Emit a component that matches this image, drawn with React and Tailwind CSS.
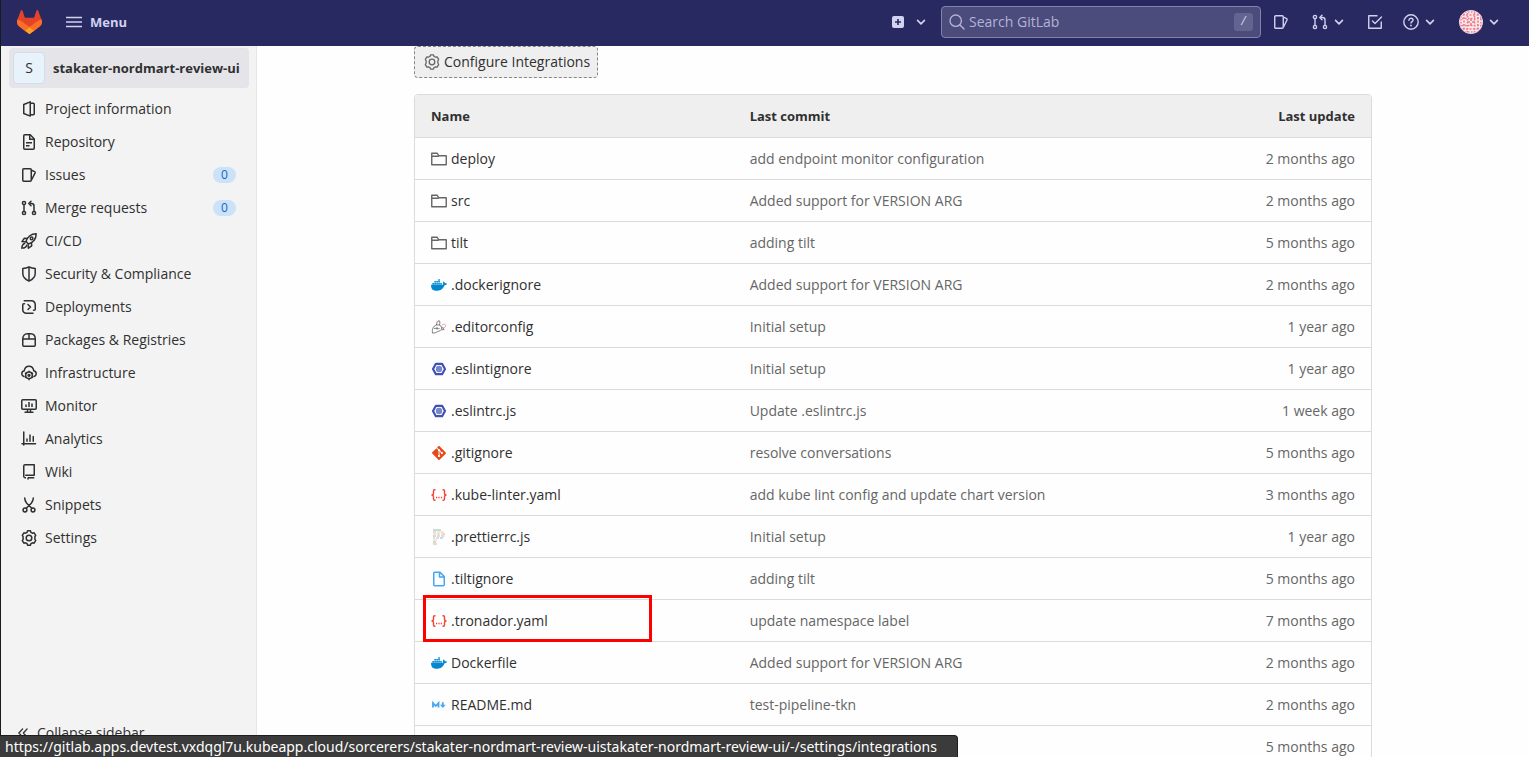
import { SiDocker, SiGit } from "react-icons/si";

function Icon({ children, className = "", size = 16, stroke = 1.5 }) {
  return (
    <svg
      aria-hidden="true"
      width={size}
      height={size}
      viewBox="0 0 16 16"
      fill="none"
      stroke="currentColor"
      strokeWidth={stroke}
      className={`shrink-0 ${className}`}
    >
      {children}
    </svg>
  );
}

const Chevron = () => (
  <Icon size={10}>
    <path strokeWidth="2.6" strokeLinecap="round" strokeLinejoin="round" d="m2.500 5.500 5.500 5.500 5.500-5.500" />
  </Icon>
);

const IssuesGlyph = () => (
  <>
    <rect x="1.750" y="1.750" width="8.500" height="12.500" rx="1" />
    <path strokeLinejoin="round" d="M10.500 3.200 13.600 4.600c.5.200.7.700.5 1.200L10.500 13" />
  </>
);

const MergeGlyph = () => (
  <>
    <circle cx="3" cy="3" r="1.600" />
    <circle cx="3" cy="13" r="1.600" />
    <circle cx="13" cy="13" r="1.600" />
    <path d="M3 4.600v6.800M13 11.400V6c0-1.500-1-2.500-2.500-2.500H8.500" />
    <path strokeLinecap="round" strokeLinejoin="round" d="M10 1.200 7.800 3.500 10 5.700" />
  </>
);

const GearGlyph = () => (
  <>
    <circle cx="8" cy="8" r="2.800" />
    <path
      strokeLinejoin="round"
      d="M6.600.8h2.800l.5 1.500 1.500.9 1.700-.4 1.600 2.500-.8 1.400v2.600l.8 1.400-1.600 2.500-1.700-.4-1.500.9-.5 1.500H6.600l-.5-1.500-1.500-.9-1.700.4-1.600-2.500.8-1.400V6.700l-.8-1.400 1.600-2.500 1.700.4 1.500-.9z"
    />
  </>
);

const NAV = [
  {
    label: "Project information",
    glyph: (
      <path strokeLinejoin="round" d="M2.750 3.500 9.250.9v14.200l-6.500-2.600zM9.250 2.250h3c.6 0 1 .4 1 1v9.500c0 .6-.4 1-1 1h-3" />
    ),
  },
  {
    label: "Repository",
    glyph: (
      <>
        <path strokeLinejoin="round" d="M2.750 1.750v12.500c0 .6.400 1 1 1h8.500c.6 0 1-.4 1-1V5l-4-4.250h-5.500c-.6 0-1 .4-1 1z" />
        <path d="M8.750.75V5.250h4.500M5 8.750h6M5 11.750h3.500" />
      </>
    ),
  },
  { label: "Issues", count: 0, glyph: <IssuesGlyph /> },
  { label: "Merge requests", count: 0, glyph: <MergeGlyph /> },
  {
    label: "CI/CD",
    glyph: (
      <>
        <path strokeLinejoin="round" d="M5 8.500C6.500 4 10 .9 15.200.8 15.100 6 12 9.500 7.500 11z" />
        <path strokeLinejoin="round" d="M6.200 5.500 3.200 5.300 1 8.600l4 .3M10.500 9.800l.2 3-3.300 2.400-.4-4" />
        <path strokeLinecap="round" d="M3.700 10.400c-2 .4-2.700 1.800-2.800 4.700 2.900-.1 4.300-.8 4.700-2.800" />
        <circle cx="10.600" cy="5.400" r="1.300" />
      </>
    ),
  },
  {
    label: "Security & Compliance",
    glyph: (
      <path strokeLinejoin="round" d="M8 .9c2 1 4 1.500 6.200 1.700v4.800c0 3.700-2.700 6-6.200 7.700-3.500-1.700-6.200-4-6.200-7.700V2.600C4 2.400 6 1.900 8 .9zV15" />
    ),
  },
  {
    label: "Deployments",
    glyph: (
      <>
        <path strokeLinecap="round" d="M3.250 1.750h7.250a3.750 3.750 0 0 1 3.750 3.750v4.750c0 .6-.4 1-1 1h-.75" />
        <path strokeLinecap="round" d="M3.500 4.750h-.75c-.6 0-1 .4-1 1v5a3.500 3.500 0 0 0 3.500 3.500H12" />
        <path strokeLinecap="round" strokeLinejoin="round" d="m7 5.500 2.500 2.500L7 10.500" />
      </>
    ),
  },
  {
    label: "Packages & Registries",
    glyph: (
      <path strokeLinejoin="round" d="M1.750 7c0-3.300 1.900-5.250 4.500-5.250h3.500c2.600 0 4.500 1.950 4.500 5.250v6.250c0 .6-.4 1-1 1H2.750c-.6 0-1-.4-1-1zM1.750 7h12.500M8 1.750V7" />
    ),
  },
  {
    label: "Infrastructure",
    glyph: (
      <>
        <path strokeLinecap="round" d="M3 11.500C1.600 11.100.8 10 .8 8.700c0-1.500 1-2.600 2.400-2.900C3.600 3.300 5.500 1.300 8 1.300s4.400 2 4.800 4.500c1.400.3 2.400 1.400 2.400 2.900 0 1.300-.8 2.400-2.200 2.800" />
        <circle cx="8" cy="10.300" r="3.300" />
        <circle cx="8" cy="10.300" r=".9" />
        <path d="M8 5.800V7M8 13.600v1.700M4 8l1.100.6M12 8l-1.100.6M4 12.600l1.100-.6M12 12.600l-1.100-.6" />
      </>
    ),
  },
  {
    label: "Monitor",
    glyph: (
      <>
        <rect x=".75" y="1.750" width="14.500" height="9.500" rx="1" />
        <path d="M5 9V6.500M8 9V4M11 9V5.500M6.500 11.250v2.500M9.500 11.250v2.500M3.500 14.250h9" />
      </>
    ),
  },
  {
    label: "Analytics",
    glyph: <path strokeLinecap="round" d="M2.750 1v13M1 12.750h13.500M6 10.200V8M9 10.200V4M12.250 10.200V5.500" />,
  },
  {
    label: "Wiki",
    glyph: (
      <path strokeLinejoin="round" d="M5 13.750H4A1.500 1.500 0 0 1 2.750 12.500V2c0-.7.500-1.250 1.250-1.250h9.250v10.500H4.200M7 15.500v-2M7 13.750h6.250" />
    ),
  },
  {
    label: "Snippets",
    glyph: (
      <>
        <circle cx="4" cy="13" r="1.900" />
        <circle cx="12" cy="13" r="1.900" />
        <path strokeLinecap="round" d="M3.700.9c0 2 .8 3.800 2 5.300l5.100 5.100M12.300.9c0 2-.8 3.800-2 5.300l-5.100 5.100" />
      </>
    ),
  },
  { label: "Settings", glyph: <GearGlyph /> },
];

const FolderIcon = () => (
  <Icon className="text-[#666666]" stroke={1.400}>
    <path strokeLinejoin="round" d="M.75 13.750V2.250h5.500l1.500 2.500h7.500v9zM.75 5.250h7" />
  </Icon>
);
const DockerIcon = () => <SiDocker size={16} className="shrink-0 text-[#0288d1]" />;
const GitIcon = () => <SiGit size={14} className="mx-px shrink-0 text-[#e64a19]" />;
const EditorConfigIcon = () => (
  <Icon stroke={0.900} className="text-[#6d6d6d]">
    <path d="M1.500 14c-.6-3.200.4-7 4-8 2.500-.6 5 .5 5.200 2.800.2 2.200-2 3.200-4 3.800-1.800.5-3 2-5.200 1.400z" />
    <path d="M3 9.500c2-.6 4 .8 5.500 0M6 8v2.500M5.500 6c0-2 1-4 2.300-4.300 1.200 0 1.400 2 .6 4.400M10.500 8l2.700 2.300-2.500.8" />
    <path stroke="#dd9b9b" d="M5 3.500c1-.9 2.400-1.800 3.500-1.800M11 6.200c1.700-1.600 3.600-1.300 3.600.4 0 1.600-1.300 2.300-2.700 2" />
  </Icon>
);
const EslintIcon = () => (
  <Icon stroke={2.200} className="text-[#3f51b5]">
    <path strokeLinejoin="round" d="M4.900 2.800h6.200L14 8l-2.900 5.200H4.900L2 8z" />
    <circle cx="8" cy="8" r="3.200" fill="#7986cb" stroke="none" />
  </Icon>
);
const YamlIcon = () => (
  <Icon stroke={1.400} className="text-[#f44336]">
    <path d="M4.500 2.700h-.8c-.8 0-1.200.5-1.200 1.300v2.200C2.500 7.300 1.800 8 .5 8c1.300 0 2 .7 2 1.800V12c0 .8.4 1.300 1.200 1.300h.8M11.500 2.700h.8c.8 0 1.200.5 1.200 1.300v2.200c0 1.100.7 1.800 2 1.800-1.300 0-2 .7-2 1.800V12c0 .8-.4 1.300-1.200 1.300h-.8" />
    <path d="M5 10.500h1.200M7.400 10.500h1.200M9.800 10.500H11" />
  </Icon>
);
const PrettierIcon = () => (
  <Icon stroke={1.200}>
    <path stroke="#7cc4c5" d="M2 1h8M6.500 5h2M2 7h3M9 9h3M2 13h3" />
    <path stroke="#eea5a5" d="M2 3h3M10.500 5H14M5 9h3M2 15h4" />
    <path stroke="#f3d08c" d="M6 3h7M2 5h3.500M2 11h4" />
    <path stroke="#cfb0d6" d="M6 7h3M2 9h2M10 7h3.500" />
  </Icon>
);
const FileIcon = () => (
  <Icon className="text-[#42a5f5]">
    <path strokeLinejoin="round" d="M2.750 2.250v11.500c0 .6.400 1 1 1h8.500c.6 0 1-.4 1-1V5.500L9 1.250H3.750c-.6 0-1 .4-1 1zM8.500 1.250V6h4.750" />
  </Icon>
);
const MarkdownIcon = () => (
  <Icon stroke={1.800} className="text-[#42a5f5]">
    <path d="M2 10.500V6l2.700 3L7.500 6v4.500M11.800 5.300v3.500" />
    <path fill="currentColor" stroke="none" d="M9 7.800h5.600l-2.800 3.300z" />
  </Icon>
);

const FILES = [
  { icon: FolderIcon, name: "deploy", commit: "add endpoint monitor configuration", date: "2 months ago" },
  { icon: FolderIcon, name: "src", commit: "Added support for VERSION ARG", date: "2 months ago" },
  { icon: FolderIcon, name: "tilt", commit: "adding tilt", date: "5 months ago" },
  { icon: DockerIcon, name: ".dockerignore", commit: "Added support for VERSION ARG", date: "2 months ago" },
  { icon: EditorConfigIcon, name: ".editorconfig", commit: "Initial setup", date: "1 year ago" },
  { icon: EslintIcon, name: ".eslintignore", commit: "Initial setup", date: "1 year ago" },
  { icon: EslintIcon, name: ".eslintrc.js", commit: "Update .eslintrc.js", date: "1 week ago" },
  { icon: GitIcon, name: ".gitignore", commit: "resolve conversations", date: "5 months ago" },
  { icon: YamlIcon, name: ".kube-linter.yaml", commit: "add kube lint config and update chart version", date: "3 months ago" },
  { icon: PrettierIcon, name: ".prettierrc.js", commit: "Initial setup", date: "1 year ago" },
  { icon: FileIcon, name: ".tiltignore", commit: "adding tilt", date: "5 months ago" },
  { icon: YamlIcon, name: ".tronador.yaml", commit: "update namespace label", date: "7 months ago", marked: true },
  { icon: DockerIcon, name: "Dockerfile", commit: "Added support for VERSION ARG", date: "2 months ago" },
  { icon: MarkdownIcon, name: "README.md", commit: "test-pipeline-tkn", date: "2 months ago" },
  { icon: null, name: "", commit: "", date: "5 months ago" },
];

function TanukiLogo() {
  return (
    <svg width="25" height="24" viewBox="0 0 25 24" aria-hidden="true">
      <path d="m24.500 9.500-.03-.09L21.080.56a.9.9 0 0 0-1.690.09l-2.300 7.010H7.830L5.540.65A.9.9 0 0 0 3.850.56L.46 9.400l-.03.1a6.290 6.290 0 0 0 2.090 7.270l.01.010.03.020 5.160 3.870 2.560 1.930 1.550 1.180c.37.280.89.280 1.270 0l1.550-1.180 2.560-1.930 5.200-3.890.01-.01A6.290 6.290 0 0 0 24.500 9.500z" fill="#e24329" />
      <path d="m24.500 9.500-.03-.09a11.440 11.440 0 0 0-4.560 2.050l-7.450 5.630 4.740 3.590 5.200-3.890.01-.01A6.290 6.290 0 0 0 24.500 9.500z" fill="#fc6d26" />
      <path d="m7.710 20.680 2.560 1.930 1.550 1.180c.37.280.89.280 1.270 0l1.550-1.180 2.560-1.930-4.740-3.590-4.750 3.590z" fill="#fca326" />
      <path d="M5.010 11.460A11.430 11.430 0 0 0 .46 9.400l-.03.1a6.290 6.290 0 0 0 2.090 7.270l.01.010.03.020 5.160 3.870 4.740-3.590z" fill="#fc6d26" />
    </svg>
  );
}

function Identicon() {
  return (
    <svg width="24" height="24" viewBox="0 0 24 24" className="shrink-0 rounded-full" aria-hidden="true">
      <circle cx="12" cy="12" r="12" fill="#fbe9ec" />
      <g stroke="#f0788a" strokeWidth="1.600" fill="none">
        <path strokeDasharray="2 1.500" d="M0 5h24M0 19h24M5 0v24M19 0v24" />
        <path strokeDasharray="1.500 1.500" d="M0 8.500h24M0 15.500h24M8.500 0v24M15.500 0v24M3 2h18M3 22h18M2 3v18M22 3v18" />
        <path d="M12 8v3M12 13v3M8 12h3M13 12h3" />
      </g>
      <circle cx="12" cy="12" r="11.500" fill="none" stroke="#d9cfe4" strokeWidth="1" />
    </svg>
  );
}

function TopBar() {
  return (
    <header className="flex h-[46px] shrink-0 items-center bg-[#292961] pb-[2px] text-[#d1d1f0]">
      <a href="#home" aria-label="GitLab" className="ml-4">
        <TanukiLogo />
      </a>
      <button type="button" className="ml-6 flex items-center gap-2 text-[13px] font-bold leading-4">
        <Icon stroke={1.400}>
          <path d="M0 3.500h16M0 8h16M0 12.500h16" />
        </Icon>
        Menu
      </button>
      <div className="ml-auto flex items-center">
        <button type="button" aria-label="Create new" className="mr-[15px] flex items-center gap-3">
          <svg width="12" height="12" viewBox="0 0 12 12" aria-hidden="true">
            <rect width="12" height="12" rx="2" fill="#d1d1f0" />
            <path d="M6 3v6M3 6h6" stroke="#292961" strokeWidth="1.600" />
          </svg>
          <Chevron />
        </button>
        <div className="flex h-8 w-80 items-center gap-1 rounded border border-[#8383ad] bg-[#4b4b7c] pl-[7px] pr-[7px] text-[#b3b3d6]">
          <Icon stroke={1.400}>
            <circle cx="6.700" cy="6.700" r="5.700" />
            <path strokeLinecap="round" d="m11 11 4 4" />
          </Icon>
          <input
            type="search"
            aria-label="Search GitLab"
            placeholder="Search GitLab"
            className="min-w-0 flex-1 bg-transparent text-sm outline-none placeholder:text-[#b3b3d6]"
          />
          <kbd className="flex h-[18px] w-[19px] items-center justify-center rounded-[3px] bg-[#646491] font-['Liberation_Mono',monospace] text-xs text-[#d1d1f0]">
            /
          </kbd>
        </div>
        <a href="#issues" aria-label="Issues" className="ml-3">
          <Icon stroke={1.400}><IssuesGlyph /></Icon>
        </a>
        <button type="button" aria-label="Merge requests" className="ml-[23px] flex items-center gap-[6px]">
          <Icon stroke={1.400}><MergeGlyph /></Icon>
          <Chevron />
        </button>
        <a href="#todos" aria-label="To-Do List" className="ml-[23px]">
          <Icon stroke={1.400}>
            <path strokeLinejoin="round" d="M10.500 1.750H1.750v12.500h12.500V7.500" />
            <path strokeLinecap="round" strokeLinejoin="round" d="M5.500 7 8 9.500l6.500-6.500" />
          </Icon>
        </a>
        <button type="button" aria-label="Help" className="ml-5 flex items-center gap-[6px]">
          <Icon stroke={1.400}>
            <circle cx="8" cy="8" r="7.200" />
            <path strokeLinecap="round" d="M5.900 6.200c.1-1.200.9-1.900 2.100-1.900s2.100.7 2.100 1.800c0 1.500-2.100 1.500-2.100 3" />
            <circle cx="8" cy="11.500" r=".9" fill="currentColor" stroke="none" />
          </Icon>
          <Chevron />
        </button>
        <button type="button" aria-label="Account" className="ml-6 mr-[30px] flex items-center gap-[6px]">
          <Identicon />
          <Chevron />
        </button>
      </div>
    </header>
  );
}

function Sidebar() {
  return (
    <aside className="flex w-64 shrink-0 flex-col border-r border-[#e6e6e6] bg-[#f3f3f3] text-sm text-[#303030]">
      <a href="#project" className="ml-2 mr-[7px] mt-[2px] flex h-10 shrink-0 items-center gap-2 rounded bg-[#e4e4e9] pl-1 text-[13px] font-bold">
        <span className="flex size-8 shrink-0 items-center justify-center rounded border border-[#d3deea] bg-[#e8f2fb] text-sm font-normal">
          S
        </span>
        <span className="whitespace-nowrap">stakater-nordmart-review-ui</span>
      </a>
      <nav aria-label="Project" className="mt-1 flex flex-1 flex-col">
        {NAV.map((item) => (
          <a key={item.label} href="#nav" className="flex h-[33px] shrink-0 items-center gap-2 pl-5 pr-5">
            <Icon>{item.glyph}</Icon>
            <span className="flex-1">{item.label}</span>
            {item.count !== undefined && (
              <span className="flex h-4 w-[23px] items-center justify-center rounded-full bg-[#cbe2f9] text-xs text-[#1068bf]">
                {item.count}
              </span>
            )}
          </a>
        ))}
      </nav>
      <button type="button" className="flex h-12 shrink-0 items-center gap-2 pl-4">
        <Icon size={12} stroke={1.800}>
          <path strokeLinecap="round" strokeLinejoin="round" d="M7.500 2.500 2.500 8l5 5.500M13.500 2.500 8.500 8l5 5.500" />
        </Icon>
        Collapse sidebar
      </button>
    </aside>
  );
}

function FileTable() {
  return (
    <div className="mt-4 overflow-hidden rounded border border-[#dbdbdb]">
      <table className="w-full table-fixed border-separate border-spacing-0 text-left text-sm">
        <thead>
          <tr className="h-[43px] bg-[#efefef] text-[13px] text-[#303030]">
            <th scope="col" className="w-1/3 border-b border-[#dbdbdb] px-4 font-bold">Name</th>
            <th scope="col" className="border-b border-[#dbdbdb] px-4 font-bold">Last commit</th>
            <th scope="col" className="w-40 border-b border-[#dbdbdb] px-4 text-right font-bold">Last update</th>
          </tr>
        </thead>
        <tbody>
          {FILES.map((file, i) => (
            <tr key={i} className="h-[42px]">
              <td className="relative border-b border-[#dbdbdb] px-4">
                {file.name && (
                  <a href="#file" className="flex items-center gap-1 text-[#303030]">
                    <span className="flex w-4 shrink-0 justify-center">
                      <file.icon />
                    </span>
                    {file.name}
                  </a>
                )}
                {file.marked && (
                  <span className="pointer-events-none absolute -top-[5px] left-2 h-[47px] w-[229px] border-[3px] border-[#ff0000]" />
                )}
              </td>
              <td className="truncate border-b border-[#dbdbdb] px-4 text-[#666666]">
                {file.commit && <a href="#commit">{file.commit}</a>}
              </td>
              <td className="border-b border-[#dbdbdb] px-4 text-right text-[#666666]">
                <time>{file.date}</time>
              </td>
            </tr>
          ))}
        </tbody>
      </table>
    </div>
  );
}

export default function App() {
  return (
    <div className="flex h-screen flex-col overflow-hidden border-l border-[#1b1b1b] bg-[#fefefe] font-['Open_Sans','Noto_Sans',sans-serif]">
      <TopBar />
      <div className="flex min-h-0 flex-1">
        <Sidebar />
        <main className="min-w-0 flex-1 overflow-hidden">
          <div className="mx-auto max-w-[990px] px-4">
            <button
              type="button"
              className="flex h-8 items-center gap-1 rounded border border-dashed border-[#868686] bg-[#efefef] pl-[9px] pr-[7px] text-sm text-[#303030]"
            >
              <Icon className="text-[#666666]" stroke={1.300}><GearGlyph /></Icon>
              Configure Integrations
            </button>
            <FileTable />
          </div>
        </main>
      </div>
      <div
        role="status"
        className="fixed bottom-0 left-0 h-[22px] w-[958px] whitespace-nowrap rounded-tr border-r border-t border-[#1e1e1e] bg-[#3b3b3b] px-[5px] font-['Noto_Sans',sans-serif] text-sm leading-[21px] text-white"
      >
        https://gitlab.apps.devtest.vxdqgl7u.kubeapp.cloud/sorcerers/stakater-nordmart-review-uistakater-nordmart-review-ui/-/settings/integrations
      </div>
    </div>
  );
}
